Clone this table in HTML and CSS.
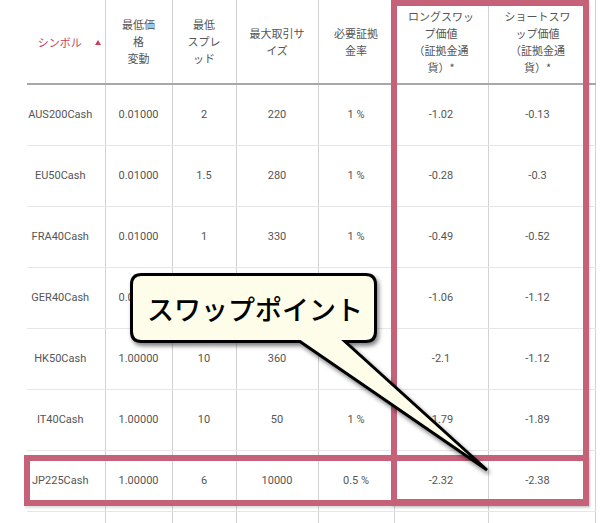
FILE: index.html
```html
<!DOCTYPE html>
<html lang="ja">
<head>
<meta charset="utf-8">
<link rel="stylesheet" href="styles.css">
</head>
<body>
<div class="page">
  <table class="spec">
    <colgroup>
      <col class="c1"><col class="c2"><col class="c3"><col class="c4"><col class="c5"><col class="c6"><col class="c7">
    </colgroup>
    <thead>
      <tr>
        <th class="sym"><span class="sym-label">シンボル</span><span class="sort-arrow"></span></th>
        <th>最低価<br>格<br>変動</th>
        <th>最低<br>スプレ<br>ッド</th>
        <th>最大取引サ<br>イズ</th>
        <th>必要証拠<br>金率</th>
        <th>ロングスワッ<br>プ価値<br>（証拠金通<br>貨）*</th>
        <th class="last">ショートスワ<br>ップ価値<br>（証拠金通<br>貨）*</th>
      </tr>
    </thead>
    <tbody>
      <tr><td class="name">AUS200Cash</td><td>0.01000</td><td>2</td><td>220</td><td>1 %</td><td>-1.02</td><td class="last">-0.13</td></tr>
      <tr><td class="name">EU50Cash</td><td>0.01000</td><td>1.5</td><td>280</td><td>1 %</td><td>-0.28</td><td class="last">-0.3</td></tr>
      <tr><td class="name">FRA40Cash</td><td>0.01000</td><td>1</td><td>330</td><td>1 %</td><td>-0.49</td><td class="last">-0.52</td></tr>
      <tr><td class="name">GER40Cash</td><td>0.01000</td><td></td><td></td><td></td><td>-1.06</td><td class="last">-1.12</td></tr>
      <tr><td class="name">HK50Cash</td><td>1.00000</td><td>10</td><td>360</td><td>1 %</td><td>-2.1</td><td class="last">-1.12</td></tr>
      <tr><td class="name">IT40Cash</td><td>1.00000</td><td>10</td><td>50</td><td>1 %</td><td>-1.79</td><td class="last">-1.89</td></tr>
      <tr><td class="name">JP225Cash</td><td>1.00000</td><td>6</td><td>10000</td><td>0.5 %</td><td>-2.32</td><td class="last">-2.38</td></tr>
      <tr><td class="name"></td><td></td><td></td><td></td><td></td><td></td><td class="last"></td></tr>
    </tbody>
  </table>

  <div class="hl hl-swap"></div>
  <div class="hl hl-jp"></div>

  <div class="callout">
    <svg class="bubble" width="360" height="200" viewBox="0 0 360 200">
      <path d="M 11.5 1.5 H 235.5 Q 245.5 1.5 245.5 11.5 V 58.5 Q 245.5 68.5 235.5 68.5 H 215 L 357 197 L 170 68.5 H 11.5 Q 1.5 68.5 1.5 58.5 V 11.5 Q 1.5 1.5 11.5 1.5 Z" fill="#fdfdea" stroke="#000" stroke-width="3" stroke-linejoin="miter"/>
    </svg>
    <span class="callout-text">スワップポイント</span>
  </div>
</div>
</body>
</html>
```

FILE: styles.css
```css
html, body {
  margin: 0;
  padding: 0;
  background: #fff;
}

.page {
  position: relative;
  width: 600px;
  height: 523px;
  overflow: hidden;
  padding-left: 27px;
  box-sizing: border-box;
  font-family: Roboto, "Noto Sans CJK JP", sans-serif;
  color: #555;
}

.spec {
  border-collapse: collapse;
  table-layout: fixed;
  width: 568px;
}

.c1 { width: 78px; }
.c2 { width: 67px; }
.c3 { width: 64px; }
.c4 { width: 82px; }
.c5 { width: 76px; }
.c6 { width: 94px; }
.c7 { width: 107px; }

.spec th {
  height: 83px;
  padding: 0;
  font-family: "Noto Sans CJK JP", sans-serif;
  font-weight: normal;
  font-size: 11px;
  line-height: 17px;
  color: #555;
  text-align: center;
  vertical-align: middle;
  white-space: nowrap;
  border-right: 1px solid #d2d2d2;
  border-bottom: 2px solid #a8a8a8;
}

.spec th.sym {
  padding-left: 7px;
  color: #cc3d5a;
}

.sym-label {
  vertical-align: middle;
}

.sort-arrow {
  display: inline-block;
  width: 0;
  height: 0;
  margin-left: 13px;
  border-left: 3px solid transparent;
  border-right: 3px solid transparent;
  border-bottom: 5px solid #cc3d5a;
  vertical-align: middle;
}

.spec tbody tr {
  height: 61px;
}

.spec td {
  padding: 0;
  font-size: 11px;
  text-align: center;
  vertical-align: middle;
  white-space: nowrap;
  color: #555;
  border-right: 1px solid #d2d2d2;
  border-bottom: 1px solid #e6e6e6;
}

.spec td.name {
  padding-right: 11px;
}

.spec .last {
  padding-right: 8px;
}

.hl {
  position: absolute;
  border: 6px solid #c5627a;
  box-sizing: border-box;
  box-shadow: 1px 2px 2px rgba(0, 0, 0, 0.12);
}

.hl-swap {
  left: 391px;
  top: 0;
  width: 198px;
  height: 505px;
}

.hl-jp {
  left: 24px;
  top: 455px;
  width: 565px;
  height: 51px;
}

.callout {
  position: absolute;
  left: 130px;
  top: 273px;
  width: 247px;
  height: 70px;
  display: flex;
  align-items: center;
  justify-content: center;
}

.bubble {
  position: absolute;
  left: 0;
  top: 0;
  overflow: visible;
  filter: drop-shadow(2px 3px 2px rgba(0, 0, 0, 0.5));
}

.callout-text {
  position: relative;
  font-family: "Noto Sans CJK JP", sans-serif;
  font-size: 27px;
  font-weight: 500;
  line-height: 1;
  color: #000;
  margin-left: 3px;
}
```
